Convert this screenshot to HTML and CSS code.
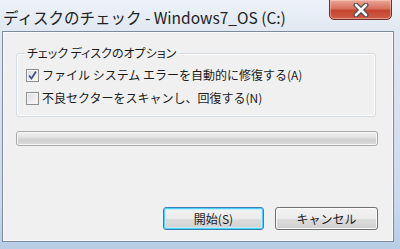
FILE: index.html
```html
<!DOCTYPE html>
<html lang="ja">
<head>
    <meta charset="UTF-8">
    <title>ディスクのチェック - Windows7_OS (C:)</title>
    <link rel="stylesheet" href="styles.css">
</head>
<body>
    <div class="window">
        <div class="titlebar">
            <span class="title">ディスクのチェック - Windows7_OS (C:)</span>
            <button class="close" type="button" aria-label="閉じる">
                <svg width="20" height="14" viewBox="0 0 20 14">
                    <path d="M5 2 L15 12 M15 2 L5 12" stroke="#4a4a52" stroke-width="5" stroke-linecap="round"/>
                    <path d="M5 2 L15 12 M15 2 L5 12" stroke="#ffffff" stroke-width="2.6" stroke-linecap="round"/>
                </svg>
            </button>
        </div>

        <div class="client">
            <div class="group">
                <div class="group-title">チェック ディスクのオプション</div>
                <label class="option">
                    <span class="check">
                        <svg width="11" height="11" viewBox="0 0 11 11">
                            <path d="M2 5.5 L4.5 8.5 L9 1.5" fill="none" stroke="#3e5290" stroke-width="1.8"/>
                        </svg>
                    </span>
                    ファイル システム エラーを自動的に修復する(A)
                </label>
                <label class="option">
                    <span class="check"></span>
                    不良セクターをスキャンし、回復する(N)
                </label>
            </div>

            <div class="progress"></div>

            <div class="actions">
                <button class="btn default" type="button">開始(S)</button>
                <button class="btn" type="button">キャンセル</button>
            </div>
        </div>
    </div>
</body>
</html>
```

FILE: styles.css
```css
body {
    margin: 0;
    font-family: "Noto Sans CJK JP", "Noto Sans", sans-serif;
    color: #1b1b1b;
}
.window {
    width: 400px;
    height: 249px;
    display: flex;
    flex-direction: column;
    background: linear-gradient(to bottom, #edf2f8 0, #e0e8f2 31px, #cbdaeb 80%, #b8cde5 100%);
}
.titlebar {
    height: 31px;
    display: flex;
    justify-content: space-between;
    align-items: flex-start;
    padding-left: 3px;
}
.title {
    font-size: 15.5px;
    line-height: 20px;
    margin-top: 7px;
    color: #222;
}
.close {
    width: 63px;
    height: 21px;
    margin: -1px 8px 0 0;
    padding: 0;
    display: flex;
    align-items: center;
    justify-content: center;
    border: 1px solid #6d3129;
    border-radius: 0 0 5px 5px;
    background: linear-gradient(to bottom, #eaa898 0, #d9705c 45%, #c5452f 55%, #cf5d47 100%);
    box-shadow: inset 0 0 0 1px rgba(255, 220, 210, 0.45);
}
.client {
    flex: 1;
    margin: 0 6px 7px 2px;
    padding: 21px 15px 0 13px;
    display: flex;
    flex-direction: column;
    border: 1px solid #7b8a9c;
    background-color: #f0f0f0;
    box-shadow: inset 0 0 0 1px #fbfbfb;
}
.group {
    height: 64px;
    box-sizing: border-box;
    margin-right: 2px;
    padding-left: 9px;
    display: flex;
    flex-direction: column;
    border: 1px solid #d5dde3;
    border-radius: 3px;
    box-shadow: inset 0 0 0 1px #fdfdfd;
}
.group-title {
    align-self: flex-start;
    margin: -8px 0 0 -1px;
    padding: 0 2px;
    font-size: 12px;
    line-height: 14px;
    font-feature-settings: "palt";
    background-color: #f0f0f0;
}
.option {
    height: 18px;
    margin-top: 6px;
    display: flex;
    align-items: center;
    gap: 3px;
    font-size: 12px;
    line-height: 18px;
}
.option + .option {
    margin-top: 5px;
}
.check {
    width: 13px;
    height: 13px;
    box-sizing: border-box;
    display: flex;
    align-items: center;
    justify-content: center;
    border: 1px solid #8e8f8f;
    background: linear-gradient(135deg, #dcdcdc 0, #f2f2f2 70%, #fbfbfb 100%);
    box-shadow: inset 0 0 0 1px #f4f4f4;
}
.progress {
    height: 15px;
    box-sizing: border-box;
    margin-top: 14px;
    border: 1px solid #a9a9a9;
    border-radius: 3px;
    background: linear-gradient(to bottom, #f3f3f3 0, #e2e2e2 40%, #cfcfcf 60%, #dcdcdc 100%);
    box-shadow: inset 0 0 0 1px #f7f7f7;
}
.actions {
    margin: auto 0 11px;
    display: flex;
    justify-content: flex-end;
    gap: 11px;
}
.btn {
    width: 103px;
    height: 23px;
    padding: 0;
    font-family: inherit;
    font-size: 12px;
    color: #1b1b1b;
    border: 1px solid #707070;
    border-radius: 3px;
    background: linear-gradient(to bottom, #f3f3f3 0, #ebebeb 50%, #dddddd 51%, #d0d0d0 100%);
    box-shadow: inset 0 0 0 1px #fcfcfc;
}
.btn.default {
    width: 101px;
    border-color: #3c7fb1;
    box-shadow: inset 0 0 0 1px #48d2fa, inset 0 0 0 2px #c6ecfb;
}
```
